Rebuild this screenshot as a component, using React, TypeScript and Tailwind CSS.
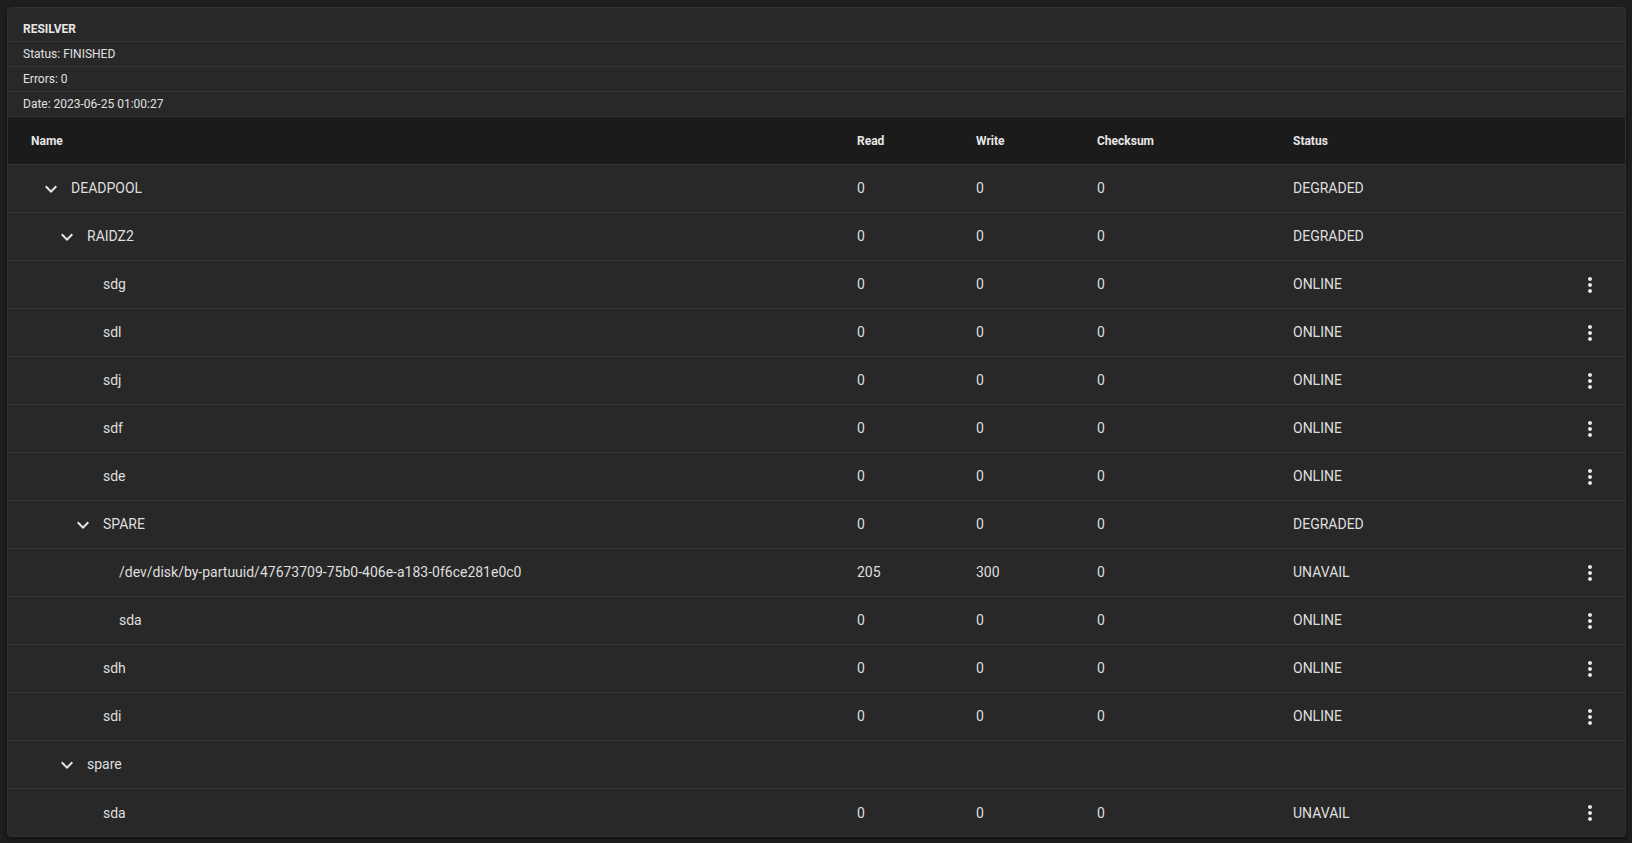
import React from 'react';

interface Row {
  name: string;
  level: number;
  group?: boolean;
  read?: string;
  write?: string;
  checksum?: string;
  status?: string;
  menu?: boolean;
}

const rows: Row[] = [
  { name: 'DEADPOOL', level: 0, group: true, read: '0', write: '0', checksum: '0', status: 'DEGRADED' },
  { name: 'RAIDZ2', level: 1, group: true, read: '0', write: '0', checksum: '0', status: 'DEGRADED' },
  { name: 'sdg', level: 2, read: '0', write: '0', checksum: '0', status: 'ONLINE', menu: true },
  { name: 'sdl', level: 2, read: '0', write: '0', checksum: '0', status: 'ONLINE', menu: true },
  { name: 'sdj', level: 2, read: '0', write: '0', checksum: '0', status: 'ONLINE', menu: true },
  { name: 'sdf', level: 2, read: '0', write: '0', checksum: '0', status: 'ONLINE', menu: true },
  { name: 'sde', level: 2, read: '0', write: '0', checksum: '0', status: 'ONLINE', menu: true },
  { name: 'SPARE', level: 2, group: true, read: '0', write: '0', checksum: '0', status: 'DEGRADED' },
  { name: '/dev/disk/by-partuuid/47673709-75b0-406e-a183-0f6ce281e0c0', level: 3, read: '205', write: '300', checksum: '0', status: 'UNAVAIL', menu: true },
  { name: 'sda', level: 3, read: '0', write: '0', checksum: '0', status: 'ONLINE', menu: true },
  { name: 'sdh', level: 2, read: '0', write: '0', checksum: '0', status: 'ONLINE', menu: true },
  { name: 'sdi', level: 2, read: '0', write: '0', checksum: '0', status: 'ONLINE', menu: true },
  { name: 'spare', level: 1, group: true },
  { name: 'sda', level: 2, read: '0', write: '0', checksum: '0', status: 'UNAVAIL', menu: true },
];

const indents = ['w-0', 'w-[16px]', 'w-[32px]', 'w-[48px]'];

const Chevron = () => (
  <svg width="24" height="24" viewBox="0 0 24 24" fill="currentColor">
    <path d="M16.59 8.59L12 13.17 7.41 8.59 6 10l6 6 6-6z" />
  </svg>
);

const MoreVert = () => (
  <svg width="24" height="24" viewBox="0 0 24 24" fill="currentColor">
    <path d="M12 8c1.1 0 2-.9 2-2s-.9-2-2-2-2 .9-2 2 .9 2 2 2zm0 2c-1.1 0-2 .9-2 2s.9 2 2 2 2-.9 2-2-.9-2-2-2zm0 6c-1.1 0-2 .9-2 2s.9 2 2 2 2-.9 2-2-.9-2-2-2z" />
  </svg>
);

const grid = 'grid grid-cols-[849px_119px_121px_196px_1fr_70px] items-center';

export default function App() {
  return (
    <div className="h-[843px] bg-[#1e1e1e] p-[7px] pr-[6px] font-['Roboto','Liberation_Sans',sans-serif]">
      <div className="h-[830px] overflow-hidden rounded-[4px] border border-[#303030] bg-[#282828] shadow-[0_2px_4px_rgba(0,0,0,0.5)]">
        {/* Resilver summary */}
        <div className="pt-[9px]">
          <div className="flex h-[25px] items-center border-b border-[#363636] pl-[15px] text-[12px] font-bold text-[#e6e6e6]">RESILVER</div>
          <div className="flex h-[25px] items-center border-b border-[#363636] pl-[15px] text-[12px] text-[#e0e0e0]">Status: FINISHED</div>
          <div className="flex h-[25px] items-center border-b border-[#363636] pl-[15px] text-[12px] text-[#e0e0e0]">Errors: 0</div>
          <div className="flex h-[25px] items-center border-b border-[#363636] pl-[15px] text-[12px] text-[#e0e0e0]">Date: 2023-06-25 01:00:27</div>
        </div>

        {/* Table header */}
        <div className={`${grid} h-[48px] border-b border-[#363636] bg-[#1b1b1b] text-[12px] font-bold text-[#e6e6e6]`}>
          <div className="pl-[23px]">Name</div>
          <div>Read</div>
          <div>Write</div>
          <div>Checksum</div>
          <div>Status</div>
          <div />
        </div>

        {/* Rows */}
        {rows.map((r, i) => (
          <div
            key={i}
            className={`${grid} h-[48px] text-[14px] text-[#dfdfdf] ${i < rows.length - 1 ? 'border-b border-[#363636]' : ''}`}
          >
            <div className="flex items-center pl-[23px]">
              <div className={`${indents[r.level]} shrink-0`} />
              <div className="flex w-[40px] shrink-0 items-center justify-center text-[#e6e6e6]">
                {r.group && <Chevron />}
              </div>
              <span className="whitespace-nowrap">{r.name}</span>
            </div>
            <div>{r.read}</div>
            <div>{r.write}</div>
            <div>{r.checksum}</div>
            <div>{r.status}</div>
            <div className="flex justify-center text-[#e6e6e6]">{r.menu && <MoreVert />}</div>
          </div>
        ))}
      </div>
    </div>
  );
}
